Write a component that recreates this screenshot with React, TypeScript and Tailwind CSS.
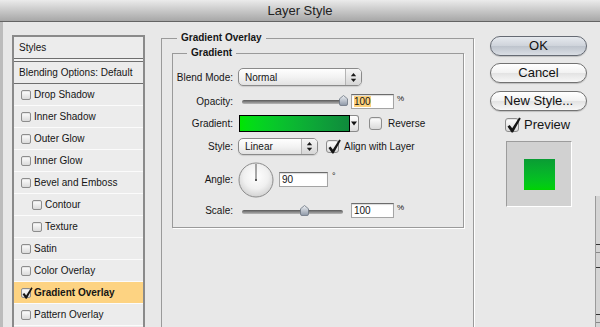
import React from 'react';

type Size = 'sm' | 'md' | 'lg';

const boxSize: Record<Size, string> = {
  sm: 'w-[10px] h-[10px] rounded-[2px]',
  md: 'w-[13px] h-[13px] rounded-[3px]',
  lg: 'w-[14px] h-[14px] rounded-[3px]',
};

const tickSize: Record<Size, string> = {
  sm: '-top-[2px] left-[0px] w-[11px] h-[12px]',
  md: '-top-[2px] left-[1px] w-[13px] h-[15px]',
  lg: '-top-[2px] left-[1px] w-[14px] h-[16px]',
};

const Checkbox = ({ size = 'sm', checked = false }: { size?: Size; checked?: boolean }) => (
  <span
    className={`relative block shrink-0 ${boxSize[size]} border border-[#8d8d8d] bg-linear-to-b from-[#ffffff] to-[#dadada] shadow-[inset_0_1px_1px_rgba(0,0,0,0.1)]`}
  >
    {checked && (
      <svg className={`absolute ${tickSize[size]}`} viewBox="0 0 14 16">
        <path d="M0.5 9.6 L2.7 8.1 L5.2 11.3 L12.1 0.4 L13.8 1.6 L6 15.5 L4.6 15.5 Z" fill="#151515" />
      </svg>
    )}
  </span>
);

const ListRow = ({
  label,
  indent = false,
  checked = false,
  active = false,
}: {
  label: string;
  indent?: boolean;
  checked?: boolean;
  active?: boolean;
}) => (
  <div
    className={`h-[22px] flex items-center gap-[3px] border-b border-[#fbfbfb] ${
      active ? 'bg-[#fdd382] font-bold' : 'bg-[#ececec]'
    } ${indent ? 'pl-[18px]' : 'pl-[7px]'}`}
  >
    <Checkbox checked={checked} />
    <span>{label}</span>
  </div>
);

const Arrows = () => (
  <svg width="7" height="11" viewBox="0 0 7 11">
    <path d="M0.8 4.3 L3.5 1 L6.2 4.3 Z" fill="#1a1a1a" />
    <path d="M0.8 6.7 L3.5 10 L6.2 6.7 Z" fill="#1a1a1a" />
  </svg>
);

const Select = ({ value, className }: { value: string; className: string }) => (
  <div
    className={`flex shrink-0 rounded-[5px] border border-[#8a8a8a] bg-linear-to-b from-[#ffffff] via-[#f3f3f3] to-[#e2e2e2] shadow-[0_1px_1px_rgba(0,0,0,0.12)] overflow-hidden ${className}`}
  >
    <span className="flex-1 pl-[6px] flex items-center">{value}</span>
    <span className="w-[16px] border-l border-[#b4b4b4] flex items-center justify-center bg-linear-to-b from-[#f6f6f6] to-[#d6d6d6]">
      <Arrows />
    </span>
  </div>
);

const Field = ({ value, className, selected = false }: { value: string; className: string; selected?: boolean }) => (
  <div
    className={`shrink-0 flex items-center pl-[2px] bg-white border border-[#a4a4a4] border-t-[#6c6c6c] shadow-[inset_0_1px_1px_rgba(0,0,0,0.15)] ${className}`}
  >
    <span className={selected ? 'bg-[#fdd27d] leading-[11px]' : 'leading-[11px]'}>{value}</span>
  </div>
);

const Slider = ({ knob, id }: { knob: number; id: string }) => (
  <div className="relative shrink-0 w-[105px] h-[14px] ml-[4px]">
    <div className="absolute left-0 top-[6px] w-[101px] h-[4px] rounded-full bg-linear-to-b from-[#585858] to-[#b8b8b8]" />
    <svg className="absolute top-[1px] w-[9px] h-[11px]" style={{ left: knob }} viewBox="0 0 9 11">
      <defs>
        <linearGradient id={id} x1="0" y1="0" x2="0" y2="1">
          <stop offset="0" stopColor="#eef1f5" />
          <stop offset="1" stopColor="#8d97a6" />
        </linearGradient>
      </defs>
      <path
        d="M4.5 0.5 L8.5 3.8 L8.5 9 Q8.5 10.5 7 10.5 L2 10.5 Q0.5 10.5 0.5 9 L0.5 3.8 Z"
        fill={`url(#${id})`}
        stroke="#6b7380"
        strokeWidth="0.8"
      />
    </svg>
  </div>
);

const Label = ({ children }: { children: React.ReactNode }) => (
  <span className="w-[60px] mr-[5px] shrink-0 text-right">{children}</span>
);

const Button = ({ children, primary = false, className = '' }: { children: React.ReactNode; primary?: boolean; className?: string }) => (
  <div
    className={`h-[20px] rounded-full flex items-center justify-center text-[13px] text-[#111] shadow-[0_1px_1px_rgba(0,0,0,0.18)] ${
      primary
        ? 'border border-[#656a73] bg-[linear-gradient(#e6e9ee_0%,#cfd4db_48%,#bec4cd_52%,#dadee4_100%)]'
        : 'border border-[#727272] bg-[linear-gradient(#ffffff_0%,#f2f2f2_48%,#e3e3e3_52%,#f7f7f7_100%)]'
    } ${className}`}
  >
    {children}
  </div>
);

export default function App() {
  return (
    <div className="w-[600px] h-[327px] overflow-hidden flex flex-col bg-[#e8e8e8] text-[10px] text-[#151515] font-['Liberation_Sans',Arial,sans-serif]">
      {/* title bar */}
      <div className="h-[22px] shrink-0 flex items-center justify-center border-b border-[#646464] bg-linear-to-b from-[#ebebeb] to-[#a7a7a7] text-[13px] text-[#222]">
        Layer Style
      </div>

      <div className="flex-1 flex items-start pl-[9px] pt-[9px] border-l-[3px] border-[#bcbcbc]">
        {/* styles list */}
        <div className="mt-[4px] w-[133px] h-[300px] shrink-0 border-2 border-[#8a8a8a] bg-[#ececec]">
          <div className="h-[21px] flex items-center pl-[5px]">Styles</div>
          <div className="h-[4px] border-y border-[#6e6e6e] bg-[#f3f3f3]" />
          <div className="h-[22px] flex items-center pl-[5px] border-b border-[#6e6e6e]">Blending Options: Default</div>
          <ListRow label="Drop Shadow" />
          <ListRow label="Inner Shadow" />
          <ListRow label="Outer Glow" />
          <ListRow label="Inner Glow" />
          <ListRow label="Bevel and Emboss" />
          <ListRow label="Contour" indent />
          <ListRow label="Texture" indent />
          <ListRow label="Satin" />
          <ListRow label="Color Overlay" />
          <ListRow label="Gradient Overlay" checked active />
          <ListRow label="Pattern Overlay" />
        </div>

        {/* Gradient Overlay group */}
        <fieldset className="ml-[16px] w-[313px] h-[320px] shrink-0 border border-[#9a9a9a] shadow-[1px_1px_0_#fff]">
          <legend className="ml-[15px] px-[4px] font-bold leading-[14px]">Gradient Overlay</legend>

          <fieldset className="mt-[1px] ml-[10px] w-[292px] border border-[#9a9a9a] shadow-[1px_1px_0_#fff]">
            <legend className="ml-[14px] px-[4px] font-bold leading-[14px]">Gradient</legend>

            <div className="flex flex-col pt-[8px] pb-[9px]">
              <div className="flex items-center h-[18px]">
                <Label>Blend Mode:</Label>
                <Select value="Normal" className="w-[124px] h-[18px]" />
              </div>

              <div className="flex items-center h-[14px] mt-[8px]">
                <Label>Opacity:</Label>
                <Slider knob={96.5} id="k1" />
                <Field value="100" selected className="ml-[4px] w-[43px] h-[15px]" />
                <span className="ml-[3px] self-start text-[8px] leading-[9px]">%</span>
              </div>

              <div className="flex items-center h-[17px] mt-[7px]">
                <Label>Gradient:</Label>
                <div className="ml-[1px] w-[111px] h-[17px] shrink-0 border border-black bg-linear-to-r from-[#00e500] to-[#0f8a3c]" />
                <div className="w-[9px] h-[17px] shrink-0 flex items-center justify-center rounded-r-[3px] border border-l-0 border-[#8a8a8a] bg-linear-to-b from-white to-[#dcdcdc]">
                  <svg width="6" height="5" viewBox="0 0 6 5">
                    <path d="M0 0.5 L6 0.5 L3 4.5 Z" fill="#111" />
                  </svg>
                </div>
                <span className="ml-[10px]">
                  <Checkbox size="md" />
                </span>
                <span className="ml-[6px]">Reverse</span>
              </div>

              <div className="flex items-center h-[17px] mt-[6px]">
                <Label>Style:</Label>
                <Select value="Linear" className="w-[80px] h-[17px]" />
                <span className="ml-[8px]">
                  <Checkbox size="md" checked />
                </span>
                <span className="ml-[5px]">Align with Layer</span>
              </div>

              <div className="flex items-center h-[35px] mt-[7px]">
                <Label>Angle:</Label>
                <svg width="36" height="36" viewBox="0 0 36 36" className="shrink-0">
                  <defs>
                    <radialGradient id="dial" cx="0.5" cy="0.4" r="0.6">
                      <stop offset="0" stopColor="#ffffff" />
                      <stop offset="0.6" stopColor="#f0f0f0" />
                      <stop offset="1" stopColor="#d2d2d2" />
                    </radialGradient>
                  </defs>
                  <circle cx="18" cy="18" r="17" fill="url(#dial)" stroke="#8c8c8c" />
                  <line x1="18" y1="18" x2="18" y2="2" stroke="#555" strokeWidth="1" />
                  <rect x="17" y="17" width="2" height="2" fill="#555" />
                </svg>
                <div className="ml-[5px] flex items-start">
                  <Field value="90" className="w-[49px] h-[15px]" />
                  <span className="ml-[4px] text-[9px] leading-[8px]">°</span>
                </div>
              </div>

              <div className="flex items-center h-[15px] mt-[6px]">
                <Label>Scale:</Label>
                <Slider knob={57.5} id="k2" />
                <Field value="100" className="ml-[4px] w-[43px] h-[15px]" />
                <span className="ml-[3px] self-start text-[8px] leading-[9px]">%</span>
              </div>
            </div>
          </fieldset>
        </fieldset>

        {/* buttons & preview */}
        <div className="ml-[16px] mt-[5px] w-[97px] shrink-0 flex flex-col">
          <Button primary>OK</Button>
          <Button className="mt-[7px]">Cancel</Button>
          <Button className="mt-[8px]">New Style...</Button>
          <div className="mt-[7px] ml-[15px] h-[14px] flex items-center gap-[5px]">
            <Checkbox size="lg" checked />
            <span className="text-[13px] leading-[14px]">Preview</span>
          </div>
          <div className="mt-[9px] ml-[16px] w-[66px] h-[66px] flex items-center justify-center bg-[#d1d1d1] border border-[#9c9c9c] border-r-white border-b-white">
            <div className="w-[31px] h-[31px] bg-linear-to-b from-[#0a9c34] to-[#00d300]" />
          </div>
        </div>

        {/* edge of the window behind */}
        <div className="ml-auto w-[5px] self-stretch flex flex-col">
          <div className="mt-[165px] flex-1 border-l border-[#9a9a9a] bg-[#d4d4d4] flex flex-col">
            <div className="mt-[48px] h-[1px] bg-[#333]" />
            <div className="mt-[7px] h-[1px] bg-[#888]" />
            <div className="mt-[14px] h-[1px] bg-[#333]" />
            <div className="mt-[46px] h-[1px] bg-[#333]" />
            <div className="mt-[7px] h-[1px] bg-[#888]" />
          </div>
        </div>
      </div>
    </div>
  );
}
